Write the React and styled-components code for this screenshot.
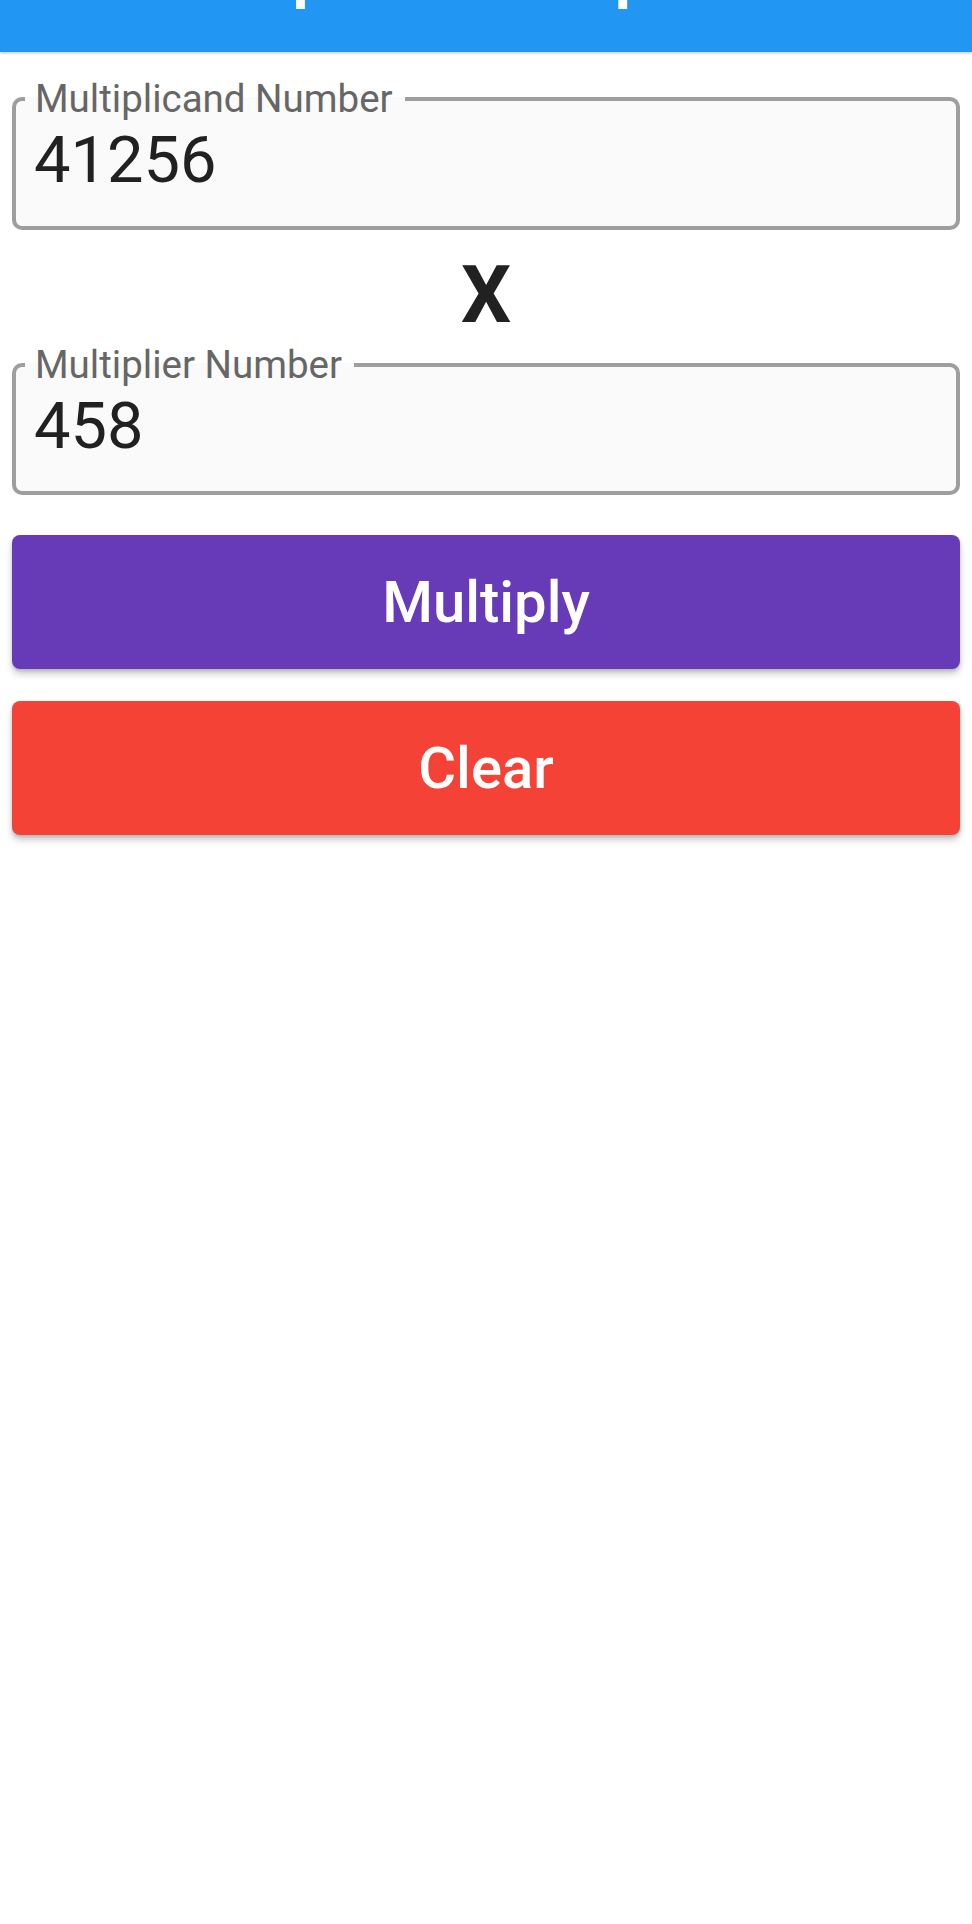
import React, {useState} from "react"
import styled, {createGlobalStyle} from "styled-components"

const GlobalStyle = createGlobalStyle`
    html, body {
        margin: 0;
        padding: 0;
        background: #ffffff;
    }
    body {
        font-family: Roboto, "Noto Sans", "Liberation Sans", sans-serif;
    }
`

const Screen = styled.div`
    width: 972px;
    min-height: 1924px;
    background: #ffffff;
    display: flex;
    flex-direction: column;
`
const AppBar = styled.header`
    height: 52px;
    background: #2196f3;
    overflow: hidden;
    box-shadow: 0 1px 3px rgba(0, 0, 0, 0.25);
    position: relative;
    z-index: 1;
`
const AppTitle = styled.h1`
    margin: -55px 0 0;
    padding-left: 150px;
    font-size: 62px;
    font-weight: 700;
    line-height: 1;
    color: #ffffff;
    white-space: nowrap;
`
const Content = styled.main`
    display: flex;
    flex-direction: column;
    padding: 28px 12px 0;
`
const FieldBox = styled.fieldset`
    margin: 0;
    min-width: 0;
    padding: 9px 18px 33px;
    border: 4px solid #9e9e9e;
    border-radius: 10px;
    background: #fafafa;
`
const FieldLabel = styled.legend`
    margin-left: -9px;
    padding: 0 12px 0 10px;
    font-size: 38.5px;
    line-height: 1;
    color: #666666;
`
const NumberInput = styled.input`
    display: block;
    width: 100%;
    height: 65px;
    margin: 0;
    padding: 0;
    border: none;
    outline: none;
    background: transparent;
    font-family: inherit;
    font-size: 65px;
    line-height: 1;
    color: #212121;
`
const TimesSign = styled.div`
    margin: 26px 0 11px;
    font-size: 79px;
    font-weight: 700;
    line-height: 1;
    text-align: center;
    color: #212121;
`
const ActionButton = styled.button`
    display: flex;
    align-items: center;
    justify-content: center;
    height: 134px;
    margin: ${props => props.$gap}px 0 0;
    padding: 0;
    border: none;
    border-radius: 8px;
    background: ${props => props.$color};
    color: #ffffff;
    font-family: inherit;
    font-size: 58px;
    font-weight: 500;
    box-shadow: 0 5px 7px rgba(0, 0, 0, 0.2), 0 2px 3px rgba(0, 0, 0, 0.12);
    cursor: pointer;
`

const NumberField = ({label, value, onChange}) => (
    <FieldBox>
        <FieldLabel>{label}</FieldLabel>
        <NumberInput type="text" inputMode="numeric" value={value}
                     onChange={event => onChange(event.target.value)}/>
    </FieldBox>
)

const App = () => {

    const [multiplicand, setMultiplicand] = useState("41256")
    const [multiplier, setMultiplier] = useState("458")

    const handleClear = () => {
        setMultiplicand("")
        setMultiplier("")
    }

    return (
        <Screen>
            <GlobalStyle/>

            <AppBar>
                <AppTitle>Multiplication Expert</AppTitle>
            </AppBar>

            <Content>

                <NumberField label="Multiplicand Number" value={multiplicand} onChange={setMultiplicand}/>

                <TimesSign>X</TimesSign>

                <NumberField label="Multiplier Number" value={multiplier} onChange={setMultiplier}/>

                <ActionButton $color="#673ab7" $gap={40}>Multiply</ActionButton>
                <ActionButton $color="#f44336" $gap={32} onClick={handleClear}>Clear</ActionButton>

            </Content>
        </Screen>
    )
}

export default App
